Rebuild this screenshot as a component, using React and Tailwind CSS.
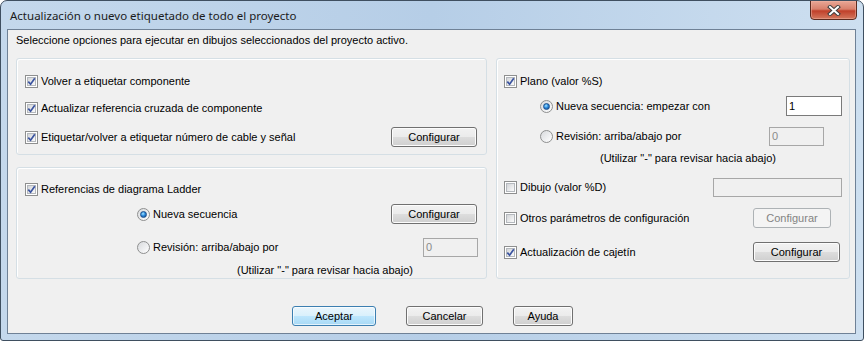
import React from 'react';

const CheckBox = ({ checked }) => (
    <span className="w-[13px] h-[13px] shrink-0 border border-[#8e8f8f] bg-white p-[1px] flex">
        <span className="relative w-full h-full border border-[#b4b8bd] bg-gradient-to-br from-[#d3d5d8] to-[#fbfbfb]">
            {checked && (
                <svg className="absolute left-[-1px] top-[-1px]" width="9" height="9" viewBox="0 0 9 9">
                    <path d="M1.3 4.6 L3.6 7.2 L7.8 1.2" fill="none" stroke="#3b54a0" strokeWidth="1.7" />
                </svg>
            )}
        </span>
    </span>
);

const Radio = ({ selected }) => (
    <span className="w-[13px] h-[13px] shrink-0 rounded-full border border-[#8e8f8f] bg-gradient-to-br from-[#d8dadd] to-[#ffffff] flex items-center justify-center">
        {selected && (
            <span className="w-[7px] h-[7px] rounded-full bg-[radial-gradient(circle_at_40%_35%,#a6e6ff_0%,#2b8be0_45%,#13407e_100%)] border border-[#1c4f8c]" />
        )}
    </span>
);

const Button = ({ children, className = '', disabled, primary }) => {
    const look = disabled
        ? 'border-[#adb2b5] bg-[#f4f4f4] text-[#838383]'
        : primary
            ? 'border-[#3c7fb1] bg-[linear-gradient(#eaf6fd_0%,#d9f0fc_50%,#bee6fd_50%,#a7d9f5_100%)] shadow-[inset_0_0_0_1px_#ffffffaa] text-black'
            : 'border-[#707070] bg-[linear-gradient(#f2f2f2_0%,#ebebeb_50%,#dddddd_50%,#cfcfcf_100%)] shadow-[inset_0_0_0_1px_#fcfcfc] text-black';
    return (
        <div className={`h-[20px] shrink-0 rounded-[3px] border flex items-center justify-center text-[11px] ${look} ${className}`}>
            {children}
        </div>
    );
};

const Field = ({ value, disabled, className = '' }) => (
    <div className={`h-[19px] shrink-0 border flex items-center pl-[2px] text-[11px] ${disabled ? 'border-[#a7a7a7] bg-[#f0f0f0] text-[#8a8a8a]' : 'border-[#7a7a7a] bg-white text-black'} ${className}`}>
        {value}
    </div>
);

const Label = ({ children }) => <span className="text-[11px] leading-[13px] whitespace-nowrap">{children}</span>;

const Group = ({ className = '', children }) => (
    <div className={`rounded-[3px] border border-[#d5dfe5] shadow-[inset_1px_1px_0_#ffffff] flex flex-col ${className}`}>
        {children}
    </div>
);

export default function App() {
    return (
        <div className="w-[864px] h-[341px] font-['Liberation_Sans',Arial,sans-serif] text-black">
            <div className="w-[864px] h-[341px] flex flex-col rounded-t-[7px] rounded-b-[3px] border border-[#3f4f60] bg-gradient-to-r from-[#c4d8ec] via-[#b6cee7] to-[#cddff0] overflow-hidden">
                {/* title bar */}
                <div className="h-[28px] shrink-0 flex items-start justify-between">
                    <div className="pl-[9px] pt-[7px] text-[11.5px] leading-[15px] font-['Noto_Sans',sans-serif] text-[#1b1b1b]">
                        Actualización o nuevo etiquetado de todo el proyecto
                    </div>
                    <div className="mt-[-1px] mr-[6px] w-[47px] h-[20px] rounded-b-[4px] border border-[#5b2a1f] bg-[linear-gradient(#e9a796_0%,#d8806c_45%,#c0402a_55%,#d4785e_100%)] shadow-[inset_0_0_0_1px_#f0b4a480] flex items-center justify-center">
                        <svg width="14" height="11" viewBox="0 0 14 11">
                            <path d="M3 2 L11 9 M11 2 L3 9" stroke="#3e3e3e" strokeWidth="4" strokeLinecap="square" />
                            <path d="M3 2 L11 9 M11 2 L3 9" stroke="#ffffff" strokeWidth="2" strokeLinecap="square" />
                        </svg>
                    </div>
                </div>

                {/* client area */}
                <div className="ml-[6px] w-[849px] h-[305px] shrink-0 border border-[#6f8196] bg-[#f0f0f0] flex flex-col">
                    <div className="pl-[8px] pt-[4px] text-[11px] leading-[13px]">
                        Seleccione opciones para ejecutar en dibujos seleccionados del proyecto activo.
                    </div>

                    <div className="mt-[11px] pl-[8px] flex gap-[9px]">
                        {/* left column */}
                        <div className="w-[471px] flex flex-col">
                            <Group className="h-[97px] pt-[13px] pl-[8px] pr-[9px]">
                                <div className="h-[18px] flex items-center gap-[3px]">
                                    <CheckBox checked />
                                    <Label>Volver a etiquetar componente</Label>
                                </div>
                                <div className="mt-[9px] h-[18px] flex items-center gap-[3px]">
                                    <CheckBox checked />
                                    <Label>Actualizar referencia cruzada de componente</Label>
                                </div>
                                <div className="mt-[10px] h-[20px] flex items-center gap-[3px]">
                                    <CheckBox checked />
                                    <Label>Etiquetar/volver a etiquetar número de cable y señal</Label>
                                    <Button className="ml-auto w-[86px]">Configurar</Button>
                                </div>
                            </Group>

                            <Group className="mt-[12px] h-[112px] pt-[12px] pl-[8px] pr-[9px]">
                                <div className="h-[18px] flex items-center gap-[3px]">
                                    <CheckBox checked />
                                    <Label>Referencias de diagrama Ladder</Label>
                                </div>
                                <div className="mt-[6px] h-[20px] flex items-center gap-[3px] pl-[112px]">
                                    <Radio selected />
                                    <Label>Nueva secuencia</Label>
                                    <Button className="ml-auto w-[86px]">Configurar</Button>
                                </div>
                                <div className="mt-[14px] h-[19px] flex items-center gap-[3px] pl-[112px]">
                                    <Radio />
                                    <Label>Revisión: arriba/abajo por</Label>
                                    <Field disabled value="0" className="ml-auto mr-[-1px] w-[55px]" />
                                </div>
                                <div className="mt-[7px] h-[13px] pl-[212px] flex">
                                    <Label>(Utilizar "-" para revisar hacia abajo)</Label>
                                </div>
                            </Group>
                        </div>

                        {/* right column */}
                        <Group className="w-[354px] h-[221px] pt-[13px] pl-[7px] pr-[7px]">
                            <div className="h-[18px] flex items-center gap-[3px]">
                                <CheckBox checked />
                                <Label>Plano (valor %S)</Label>
                            </div>
                            <div className="mt-[6px] h-[20px] flex items-center gap-[3px] pl-[36px]">
                                <Radio selected />
                                <Label>Nueva secuencia: empezar con</Label>
                                <Field value="1" className="ml-auto w-[56px] h-[20px]" />
                            </div>
                            <div className="mt-[11px] h-[19px] flex items-center gap-[3px] pl-[36px]">
                                <Radio />
                                <Label>Revisión: arriba/abajo por</Label>
                                <Field disabled value="0" className="ml-auto mr-[18px] w-[55px]" />
                            </div>
                            <div className="mt-[6px] h-[13px] pl-[96px] flex">
                                <Label>(Utilizar "-" para revisar hacia abajo)</Label>
                            </div>
                            <div className="mt-[13px] h-[19px] flex items-center gap-[3px]">
                                <CheckBox />
                                <Label>Dibujo (valor %D)</Label>
                                <Field disabled value="" className="ml-auto w-[129px] border-[#8a8a8a]" />
                            </div>
                            <div className="mt-[11px] h-[20px] flex items-center gap-[3px]">
                                <CheckBox />
                                <Label>Otros parámetros de configuración</Label>
                                <Button disabled className="ml-auto mr-[11px] w-[78px]">Configurar</Button>
                            </div>
                            <div className="mt-[14px] h-[20px] flex items-center gap-[3px]">
                                <CheckBox checked />
                                <Label>Actualización de cajetín</Label>
                                <Button className="ml-auto mr-[2px] w-[87px]">Configurar</Button>
                            </div>
                        </Group>
                    </div>

                    {/* dialog buttons */}
                    <div className="mt-[27px] pl-[284px] flex gap-[30px]">
                        <Button primary className="w-[84px]">Aceptar</Button>
                        <Button className="w-[77px]">Cancelar</Button>
                        <Button className="w-[60px]">Ayuda</Button>
                    </div>
                </div>
            </div>
        </div>
    );
}
